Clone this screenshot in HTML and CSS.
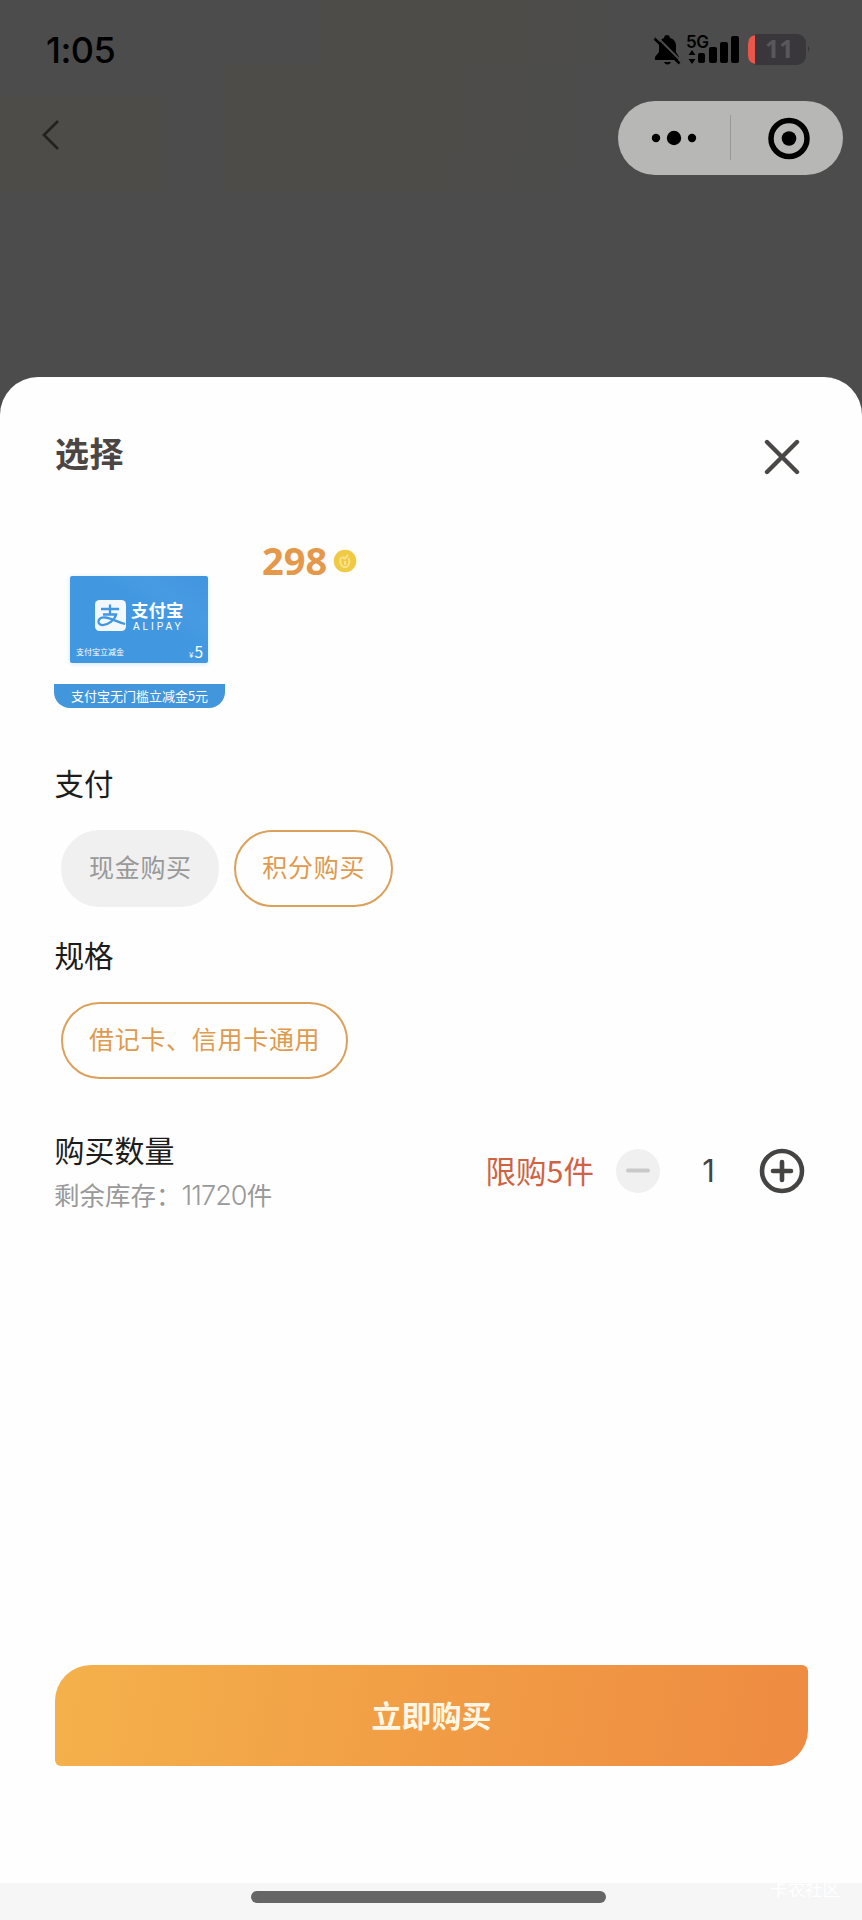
FILE: index.html
```html
<!DOCTYPE html>
<html lang="zh-CN">
<head>
<meta charset="utf-8">
<title>选择</title>
<link rel="stylesheet" href="styles.css">
</head>
<body>
<div class="screen">
  <header class="top">
    <div class="status">
      <span class="time">1:05</span>
      <svg class="status-icons" width="160" height="36" viewBox="652 32 160 36">
        <path d="M655 60v-3l4-5v-6c0-4 2-7 5-8 0-4 6-4 6 0 4 1 6 4 6 8v6l3 5v3z"/>
        <path d="M664 62h7q-1 2.500-3.500 2.500t-3.500-2.500z"/>
        <path class="slash-gap" d="M656 36l25 25"/>
        <path class="slash" d="M654.500 38.500l25 25"/>
        <text class="net" x="686" y="48">5G</text>
        <path d="M692 50l3.500 5h-7zM692 64l3.500-5h-7z"/>
        <rect x="698" y="53" width="7" height="10" rx="2"/>
        <rect x="709" y="47" width="8" height="16" rx="2"/>
        <rect x="720" y="42" width="8" height="21" rx="2"/>
        <rect x="731" y="36" width="8" height="27" rx="2"/>
        <rect class="battery" x="748" y="34" width="58" height="31" rx="9"/>
        <path class="level" d="M755 35v29q-7-1-7-9v-11q0-8 7-9z"/>
        <path class="battery" d="M808 46q3 3 0 6z"/>
        <text class="percent" x="765" y="58">11</text>
      </svg>
    </div>
    <div class="nav">
      <svg class="back" width="20" height="32" viewBox="0 0 20 32"><path d="M18 2L4 16l14 14"/></svg>
      <div class="capsule">
        <svg width="225" height="74" viewBox="618 101 225 74">
          <circle cx="656" cy="138" r="4.200"/><circle cx="674" cy="138" r="7.200"/><circle cx="692" cy="138" r="4.200"/>
          <path class="divider" d="M730.500 115v45"/>
          <circle class="ring" cx="789" cy="138.500" r="18"/><circle cx="789" cy="138.500" r="7.300"/>
        </svg>
      </div>
    </div>
  </header>

  <main class="sheet">
    <div class="sheet-head">
      <h1>选择</h1>
      <svg class="close" width="36" height="36" viewBox="0 0 36 36"><path d="M3 3l30 30M33 3L3 33"/></svg>
    </div>

    <section class="product">
      <div class="thumb">
        <div class="voucher">
          <div class="brand">
            <svg width="31" height="31" viewBox="0 0 31 31">
              <rect width="31" height="31" rx="4.500"/>
              <path d="M6 9h18M15 4.500v10M8 14.500h13c-1 5-8 11-14 10.500-6-1-4-8 3-7.500 6 .4 12 4.500 20 6.500"/>
            </svg>
            <div class="brand-name"><b>支付宝</b><span>ALIPAY</span></div>
          </div>
          <div class="voucher-foot"><span>支付宝立减金</span><span class="amount"><i>¥</i>5</span></div>
        </div>
        <div class="ribbon">支付宝无门槛立减金5元</div>
      </div>
      <div class="price">
        <span>298</span>
        <svg width="24" height="24" viewBox="0 0 24 24">
          <circle class="coin" cx="12" cy="12" r="11.300"/>
          <path d="M8 8.500c-1.500 3-1 8 2.500 9.500h3c3-2 3.500-6 2-9M12 12v4M9 8l3 1.500L15 6"/>
        </svg>
      </div>
    </section>

    <h2>支付</h2>
    <div class="chips">
      <span class="chip disabled">现金购买</span>
      <span class="chip">积分购买</span>
    </div>
    <h2>规格</h2>
    <div class="chips">
      <span class="chip">借记卡、信用卡通用</span>
    </div>

    <section class="quantity">
      <div class="quantity-info">
        <h2>购买数量</h2>
        <p>剩余库存：<span>11720</span>件</p>
      </div>
      <div class="stepper">
        <span class="limit">限购5件</span>
        <svg width="44" height="44" viewBox="0 0 44 44"><circle class="minus-bg" cx="22" cy="22" r="22"/><path class="minus" d="M12 21.500h20"/></svg>
        <span class="count">1</span>
        <svg width="46" height="46" viewBox="0 0 46 46"><circle class="plus" cx="23" cy="23" r="20"/><path class="plus" d="M14 23h18M23 14v18"/></svg>
      </div>
    </section>

    <button class="buy">立即购买</button>
  </main>

  <footer class="home">
    <div class="indicator"></div>
    <span class="watermark">卡农社区</span>
  </footer>
</div>
</body>
</html>
```
FILE: styles.css
```css
* { box-sizing: border-box; margin: 0; padding: 0; }
body { font-family: "Noto Sans CJK SC", sans-serif; background: #4c4c4c; }
svg { display: block; flex: none; }
.screen { width: 862px; height: 1920px; display: flex; flex-direction: column; overflow: hidden; }

.top {
  height: 377px;
  background:
    linear-gradient(#4d4c49, #4d4c49) 0 96px / 163px 96px no-repeat,
    linear-gradient(100deg, #4d4c49 60%, #4c4c4c) 222px 64px / 350px 128px no-repeat,
    linear-gradient(90deg, #4d4c49 60%, #4c4c4c) 320px 0 / 300px 64px no-repeat,
    #4c4c4c;
}
.status { height: 101px; display: flex; justify-content: space-between; padding: 32px 50px 0 46px; }
.time { font: 500 36px/37px Inter, sans-serif; letter-spacing: -0.5px; color: #000; }
.status-icons .slash { stroke: #000; stroke-width: 2.500px; }
.status-icons .slash-gap { stroke: #4d4c4a; stroke-width: 2px; }
.net { font: 600 17px Inter, sans-serif; letter-spacing: -0.5px; }
.battery { fill: #39373b; }
.level { fill: #e9574b; }
.percent { font: 700 25px "Noto Sans", sans-serif; fill: #59575c; }
.nav { height: 74px; display: flex; justify-content: space-between; padding: 0 19px 0 40px; }
.back { margin-top: 18px; fill: none; stroke: #232221; stroke-width: 2.800px; }
.capsule { width: 225px; height: 74px; border-radius: 37px; background: #b7b7b6; }
.divider { stroke: #999; stroke-width: 1px; }
.ring { fill: none; stroke: #000; stroke-width: 5.500px; }

.sheet { flex: 1; background: #fefefe; border-radius: 38px 38px 0 0; padding: 0 54px; display: flex; flex-direction: column; }
.sheet-head { height: 161px; display: flex; justify-content: space-between; padding: 51px 8px 0 0; }
h1 { font-size: 34px; font-weight: 600; line-height: 50px; letter-spacing: 0.5px; color: #4b4543; padding-left: 1px; }
.close { margin-top: 11px; stroke: #4b4746; stroke-width: 4.400px; stroke-linecap: round; }

.product { display: flex; gap: 37px; height: 220px; }
.thumb { width: 171px; height: 170px; display: flex; flex-direction: column; align-items: center; padding-top: 38px; justify-content: space-between; }
.voucher {
  width: 138px; height: 87px; border-radius: 2px; color: #fff; padding: 24px 5px 0 6px; margin-right: 1px;
  background: linear-gradient(35deg, #4198e0 55%, #479be2 75%, #4194df);
  box-shadow: 0 1px 4px #cfe6fa;
}
.brand { display: flex; gap: 5px; padding-left: 19px; height: 42px; }
.brand rect { fill: #f2f8fe; }
.brand path { fill: none; stroke: #4198e0; stroke-width: 2.300px; }
.brand-name b { display: block; font-size: 17.500px; line-height: 20px; font-weight: 600; }
.brand-name span { display: block; font: 400 10px/11px "Liberation Sans", sans-serif; letter-spacing: 2.900px; padding: 1px 0 0 2px; }
.voucher-foot { display: flex; justify-content: space-between; font-size: 8px; line-height: 20px; white-space: nowrap; }
.amount { font-size: 15.500px; line-height: 19px; }
.amount i { font-size: 8px; font-style: normal; margin-right: 1px; }
.ribbon { width: 171px; height: 24px; border-radius: 0 0 16px 16px; background: #4296dc; color: #fff; font-size: 13px; line-height: 23px; text-align: center; white-space: nowrap; }
.price { display: flex; gap: 6px; height: 46px; align-items: center; font: 700 38px/44px "Noto Sans", sans-serif; color: #e6984a; }
.price span { margin-top: -2px; }
.coin { fill: #f0ca43; }
.price path { fill: none; stroke: #f8e188; stroke-width: 2px; }

h2 { font-size: 29.500px; font-weight: 400; line-height: 44px; color: #1c1c1c; padding-left: 0.5px; white-space: nowrap; }
.product + h2 { margin-top: 2px; }
.chips { display: flex; gap: 15px; padding: 26px 0 25px 7px; }
.chip { height: 77px; padding: 0 25.5px 0 26px; border: 2px solid #dba05a; border-radius: 39px; color: #df9a4d; font-size: 25px; letter-spacing: 0.700px; line-height: 68px; white-space: nowrap; }
.chip.disabled { background: #f0f0f0; border-color: #f0f0f0; color: #999; }

.quantity { display: flex; justify-content: space-between; margin-top: 23px; padding-right: 3px; }
.quantity h2 { font-size: 30px; }
.quantity p { font-size: 25.500px; line-height: 46px; color: #999; white-space: nowrap; }
.quantity p span { font: 300 27px Inter, sans-serif; letter-spacing: -0.900px; }
.stepper { display: flex; align-items: center; height: 88px; }
.limit { font-size: 30.500px; line-height: 44px; color: #cf6242; margin: -2px 22px 0 0; }
.count { width: 99px; padding-right: 2px; text-align: center; font: 400 31px/44px Inter, sans-serif; color: #444; }
.plus { fill: none; stroke: #454443; stroke-width: 4.600px; stroke-linecap: round; }
.minus-bg { fill: #f0f0f0; }
.minus { stroke: #c9c9c9; stroke-width: 4px; stroke-linecap: round; }

.buy {
  margin: auto 0 117px 1px; height: 101px; border: 0; border-radius: 36px 6px 36px 6px; padding-bottom: 2px;
  background: linear-gradient(100deg, #f4b14b, #f19b45 55%, #ee8b41);
  font: 600 30px/99px "Noto Sans CJK SC", sans-serif; color: #fff7e6;
}
.home { position: relative; height: 37px; background: #f6f6f6; padding: 8px 0 0 251px; }
.indicator { width: 355px; height: 12px; border-radius: 6px; background: #666; }
.watermark { position: absolute; right: 22px; top: -5px; font-size: 17.500px; line-height: 22px; color: #fff; }
```
